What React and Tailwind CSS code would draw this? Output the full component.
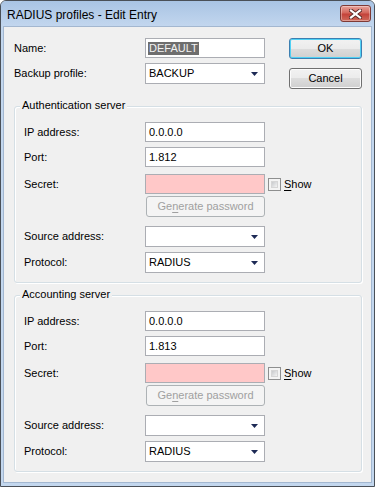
import React from "react";

const Arrow = () => (
  <svg width="7" height="4" viewBox="0 0 7 4" className="block">
    <path d="M0 0H7L3.5 4Z" fill="#1d2a55" />
  </svg>
);

function TextBox({ value, pink, selected }) {
  return (
    <div
      className={`w-[120px] h-[20px] border border-[#abadb3] flex items-center pl-[3px] ${
        pink ? "bg-[#ffc8c8]" : "bg-white"
      }`}
    >
      {selected ? (
        <span className="bg-[#6e6e6e] text-[#f2f2f2] leading-[13px] -ml-[1px] px-[1px]">{value}</span>
      ) : (
        <span className="leading-[13px]">{value}</span>
      )}
    </div>
  );
}

function Combo({ value }) {
  return (
    <div className="w-[120px] h-[21px] border border-[#abadb3] bg-white flex items-center justify-between pl-[3px] pr-[6px]">
      <span className="leading-[13px]">{value}</span>
      <Arrow />
    </div>
  );
}

function Row({ label, children, className = "", labelW = "w-[121px]" }) {
  return (
    <div className={`flex items-center ${className}`}>
      <div className={`${labelW} shrink-0 leading-[13px]`}>{label}</div>
      {children}
    </div>
  );
}

function Checkbox() {
  return (
    <div className="w-[13px] h-[13px] border border-[#8e8f8f] bg-[#f4f4f4] p-[2px]">
      <div className="w-full h-full bg-[linear-gradient(135deg,#c8cacd,#f3f3f3)] border border-[#d6d6d6]" />
    </div>
  );
}

function Group({ title, ip, port, className = "" }) {
  return (
    <div
      className={`relative border border-[#d5dfe5] rounded-[3px] shadow-[inset_1px_1px_0_#ffffff,1px_1px_0_#ffffff] pt-[15px] pb-[9px] pl-[9px] ${className}`}
    >
      <span className="absolute left-[5px] -top-[8px] px-[2px] bg-[#f0f0f0] leading-[13px]">{title}</span>
      <Row label="IP address:">
        <TextBox value={ip} />
      </Row>
      <Row label="Port:" className="mt-[5px]">
        <TextBox value={port} />
      </Row>
      <Row label="Secret:" className="mt-[7px]">
        <TextBox value="" pink />
        <div className="ml-[3px]">
          <Checkbox />
        </div>
        <span className="ml-[3px] leading-[13px]">
          <span className="underline underline-offset-[2px]">S</span>how
        </span>
      </Row>
      <Row label="" className="mt-[2px]">
        <div className="ml-[1px] w-[119px] h-[21px] border border-[#adb2b5] rounded-[3px] bg-[#f4f4f4] flex items-center justify-center text-[#a0a0a0] leading-[13px]">
          <span>
            Ge<span className="underline underline-offset-[2px]">n</span>erate password
          </span>
        </div>
      </Row>
      <Row label="Source address:" className="mt-[9px]">
        <Combo value="" />
      </Row>
      <Row label="Protocol:" className="mt-[5px]">
        <Combo value="RADIUS" />
      </Row>
    </div>
  );
}

function Button({ children, primary }) {
  return (
    <div
      className={`w-[73px] h-[21px] rounded-[3px] border flex items-center justify-center leading-[13px] bg-[linear-gradient(#f2f2f2,#ebebeb_50%,#dddddd_50%,#cfcfcf)] ${
        primary
          ? "border-[#3c7fb1] shadow-[inset_0_0_0_1px_#4fd1f5]"
          : "border-[#707070] shadow-[inset_0_0_0_1px_#fcfcfc]"
      }`}
    >
      {children}
    </div>
  );
}

export default function App() {
  return (
    <div className="w-[375px] h-[487px] font-['Liberation_Sans',Arial,sans-serif] text-[11px] text-black">
      <div className="w-full h-full border border-[#4a5058] rounded-t-[6px] bg-[#c3d7ee] flex flex-col overflow-hidden">
        <div className="h-[25px] shrink-0 flex items-start justify-between bg-[linear-gradient(#a9c4e4,#c2d6ee)] pr-[3px]">
          <div className="pl-[6px] pt-[7px] text-[12px] leading-[15px]">RADIUS profiles - Edit Entry</div>
          <div className="mt-[4px] w-[31px] h-[17px] rounded-[3px] border border-[#7e3a36] bg-[linear-gradient(#e7a39b,#d4675c_45%,#c4433a_55%,#cf6a5b)] flex items-center justify-center shadow-[inset_0_0_0_1px_rgba(255,255,255,0.35)]">
            <svg width="13" height="10" viewBox="0 0 13 10">
              <path d="M2 1.5L11 8.5M11 1.5L2 8.5" stroke="#5b2a27" strokeWidth="4" strokeLinecap="square" />
              <path d="M2 1.5L11 8.5M11 1.5L2 8.5" stroke="#ffffff" strokeWidth="2.2" strokeLinecap="square" />
            </svg>
          </div>
        </div>
        <div className="flex-1 mx-[2px] mb-[3px] border border-[#a3b7d0] bg-[#f0f0f0] pt-[11px] pl-[10px] pr-[9px]">
          <div className="flex items-start">
            <div className="flex flex-col">
              <Row label="Name:" labelW="w-[131px]">
                <TextBox value="DEFAULT" selected />
              </Row>
              <Row label="Backup profile:" labelW="w-[131px]" className="mt-[5px]">
                <Combo value="BACKUP" />
              </Row>
            </div>
            <div className="ml-auto flex flex-col gap-[9px]">
              <Button primary>OK</Button>
              <Button>Cancel</Button>
            </div>
          </div>
          <Group title="Authentication server" ip="0.0.0.0" port="1.812" className="mt-[17px]" />
          <Group title="Accounting server" ip="0.0.0.0" port="1.813" className="mt-[12px]" />
        </div>
      </div>
    </div>
  );
}
